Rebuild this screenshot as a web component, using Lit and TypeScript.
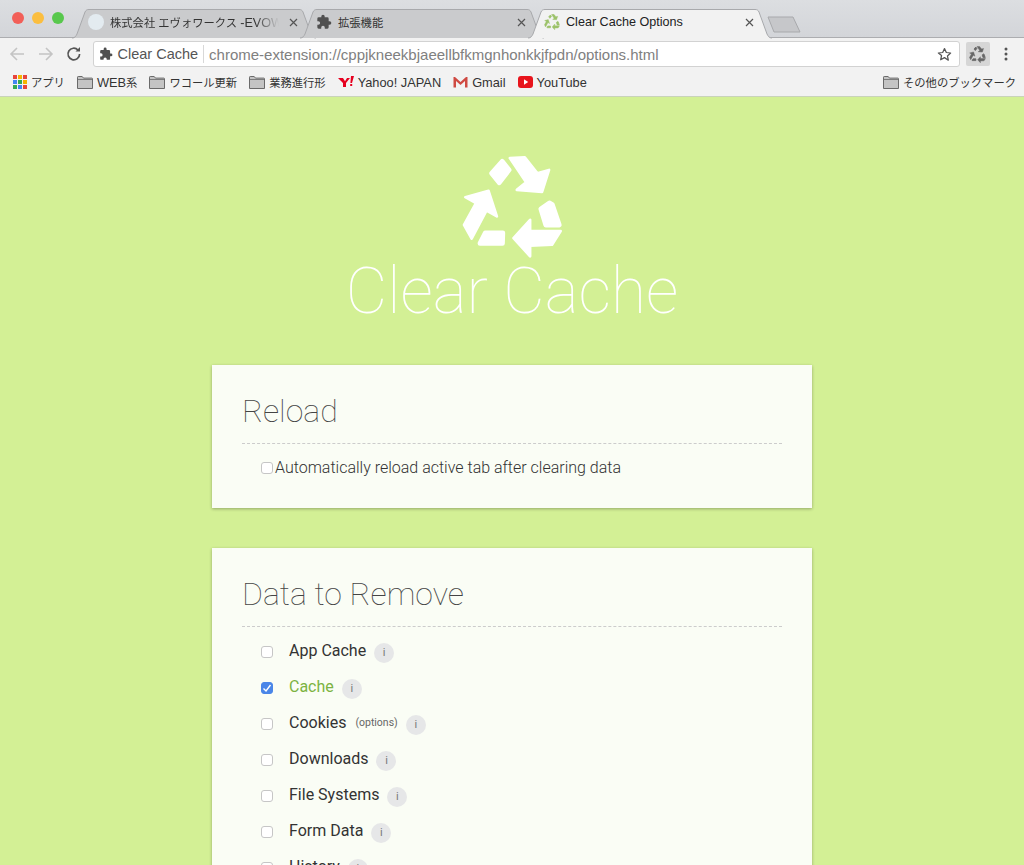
import { LitElement, html, css, svg } from "lit";
import { customElement } from "lit/decorators.js";

const recycleShapes = svg`
  <g stroke-width="14">
    <polygon points="484,64 505,90 475,129 452,100"/>
    <polygon points="433,279 486,279 485,311 417,311"/>
    <polygon points="600,207 626,189 635,194 656,256 615,256"/>
  </g>
  <g stroke-width="8">
    <polygon points="507,54 552,52 590,100 625,90 604,156 528,150 556,127"/>
    <polygon points="373,172 443,153 468,230 437,212 392,297 369,255 405,190"/>
    <polygon points="568,240 568,274 660,274 634,315 568,318 568,350 518,295"/>
  </g>`;

const recycle = (size: number, color: string) => html`<svg class="noshrink" width=${size} height=${size} viewBox="360 45 310 310" fill=${color} stroke=${color} stroke-linejoin="round">${recycleShapes}</svg>`;

const puzzle = (size: number, color = "#505050") => html`<svg class="noshrink" width=${size} height=${size} viewBox="0 0 24 24" fill=${color}><path d="M20.5 11H19V7a2 2 0 0 0-2-2h-4V3.5a2.5 2.5 0 0 0-5 0V5H4a2 2 0 0 0-2 2v3.8h1.5a2.7 2.7 0 0 1 0 5.4H2V20a2 2 0 0 0 2 2h3.8v-1.5a2.7 2.7 0 0 1 5.4 0V22H17a2 2 0 0 0 2-2v-4h1.5a2.5 2.5 0 0 0 0-5z"/></svg>`;

const closeX = html`<svg class="close" width="9" height="9" viewBox="0 0 9 9" stroke="#555" stroke-width="1.2"><path d="M1 1l7 7M8 1l-7 7"/></svg>`;

const folder = html`<svg class="noshrink" width="16" height="13" viewBox="0 0 16 13"><path d="M.5 12.5V1.2q0-.7.7-.7h4l1.3 1.6h8.3q.7 0 .7.7v9.7z" fill="#c4c4c4" stroke="#6a6a6a"/><path d="M.5 3.5h15" stroke="#6a6a6a" stroke-width=".8"/></svg>`;

const appsColors = ["#e8453c","#f4b400","#e8453c","#4285f4","#34a853","#f4b400","#34a853","#4285f4","#e8453c"];
const apps = html`<svg class="noshrink" width="14" height="14" viewBox="0 0 14 14">${appsColors.map((c, i) => svg`<rect x=${(i % 3) * 5} y=${Math.floor(i / 3) * 5} width="4" height="4" fill=${c}/>`)}</svg>`;

const rows: { label: string; checked?: boolean; options?: boolean }[] = [
  { label: "App Cache" },
  { label: "Cache", checked: true },
  { label: "Cookies", options: true },
  { label: "Downloads" },
  { label: "File Systems" },
  { label: "Form Data" },
  { label: "History" },
];

@customElement("app-root")
export class AppRoot extends LitElement {
  static styles = css`
    :host { display: block; width: 1024px; height: 865px; overflow: hidden; background: #d3f095; font-family: "Liberation Sans", "Noto Sans CJK JP", sans-serif; }
    .noshrink { flex: none; display: block; }
    .strip { height: 37px; display: flex; background: linear-gradient(#dcdee1, #d3d5d9); border-bottom: 1px solid #acadb0; position: relative; box-sizing: content-box; }
    .lights { display: flex; gap: 8px; padding: 12px 0 0 12px; width: 72px; box-sizing: border-box; flex: none; }
    .lights i { width: 12px; height: 12px; border-radius: 50%; flex: none; }
    .tabs { display: flex; align-items: flex-end; flex: none; }
    .tab { width: 244px; height: 29px; margin-right: -16px; position: relative; display: flex; align-items: center; padding: 0 13px 3px 16px; box-sizing: border-box; gap: 6px; font-size: 12.6px; color: #333; margin-bottom: -1px; }
    .tab.active { z-index: 2; color: #222; }
    .shape { position: absolute; left: 0; top: 0; z-index: 0; }
    .tab > *:not(.shape) { position: relative; z-index: 1; }
    .title { flex: 1; white-space: nowrap; overflow: hidden; min-width: 0; }
    .title.fade { -webkit-mask-image: linear-gradient(to left, transparent 0, #000 24px); mask-image: linear-gradient(to left, transparent 0, #000 24px); }
    .cjk { font-size: 11.3px; }
    .close { flex: none; margin: 0 5px 0 4px; }
    .fav { width: 16px; height: 16px; border-radius: 50%; background: #e3ebf0; flex: none; }
    .newtab { flex: none; margin: 16px 0 0 11px; z-index: 1; }
    .toolbar { height: 32px; background: #f2f2f2; display: flex; align-items: center; padding: 0 0 0 3px; }
    .nav { width: 28.5px; display: flex; justify-content: center; flex: none; }
    .omni { width: 867px; margin-left: 4px; height: 26px; flex: none; box-sizing: border-box; background: #fff; border: 1px solid #d2d2d2; border-radius: 3px; display: flex; align-items: center; padding: 0 6px 0 5px; font-size: 14.5px; white-space: nowrap; }
    .omni .chip { color: #555; margin-left: 5px; }
    .omni .sep { width: 1px; height: 18px; background: #d8d8d8; margin: 0 5px 0 5px; flex: none; }
    .omni .url { color: #808080; flex: 1; font-size: 15px; }
    .extbtn { width: 24px; height: 24px; background: #d6d6d6; border-radius: 2px; margin-left: 6px; display: flex; align-items: center; justify-content: center; flex: none; }
    .dots { flex: none; margin-left: 14px; }
    .bookmarks { background: #f2f2f2; border-bottom: 1px solid #c9d3ba; display: flex; align-items: center; padding: 0 8px 2px 13px; box-sizing: content-box; height: 24px; gap: 12px; font-size: 12.8px; color: #333; white-space: nowrap; }
    .bm { display: flex; align-items: center; gap: 4px; }
    .bm.last { margin-left: auto; }
    .page { display: flex; flex-direction: column; align-items: center; padding-top: 58px; }
    .hero { display: flex; flex-direction: column; align-items: center; }
    .hero h1 { margin: -4px 0 0; font: 100 64px/76px Roboto, sans-serif; color: #fff; }
    .card { width: 600px; box-sizing: border-box; background: #fafdf5; box-shadow: 0 1px 3px rgba(0,0,0,.3); padding: 27px 30px 0; margin-bottom: 40px; }
    .first { margin-top: 35px; height: 143px; }
    .card h2 { margin: 0; font: 100 32px/38px Roboto, sans-serif; color: #444; padding: 0 0 13px 0; border-bottom: 1px dashed #ccc; }
    .cb { width: 12px; height: 12px; box-sizing: border-box; border: 1px solid #c6c6c6; border-radius: 3px; background: #fff; flex: none; display: block; }
    .cb.on { background: #4a86e8; border-color: #4a86e8; }
    .cb svg { display: block; }
    .reload { display: flex; align-items: center; padding: 14px 0 0 19px; gap: 2px; font: 300 16px/20px Roboto, sans-serif; color: #333; }
    .list { padding-top: 7px; }
    .row { height: 36px; display: flex; align-items: center; padding-left: 19px; font: 400 16px/20px Roboto, sans-serif; color: #333; }
    .row .label { margin-left: 16px; position: relative; top: -1px; }
    .row.on .label { color: #7cb342; }
    .opt { font-size: 10.5px; color: #666; margin-left: 9px; position: relative; top: -1px; }
    .info { width: 20px; height: 20px; border-radius: 50%; background: #e6e7e8; color: #777; font-size: 11px; line-height: 20px; text-align: center; margin-left: 8px; position: relative; top: 1px; flex: none; }
  `;

  private tab(content: unknown, active = false) {
    const path = "M0 29C3 29 4 27 5 25L13 3C14 1 15 .5 17 .5H227C229 .5 230 1 231 3L239 25C240 27 241 29 244 29";
    return html`<div class="tab ${active ? "active" : ""}">
      <svg class="shape" width="244" height="30" viewBox="0 0 244 30"><path d=${path} fill=${active ? "#f2f2f2" : "#cacbcd"} stroke="#a8a9ac"/></svg>
      ${content}
    </div>`;
  }

  render() {
    return html`
      <div class="strip">
        <div class="lights"><i style="background:#f25f58"></i><i style="background:#fbbe3f"></i><i style="background:#58c84d"></i></div>
        <div class="tabs">
          ${this.tab(html`<span class="fav"></span><span class="title fade"><span class="cjk">株式会社 エヴォワークス </span>-EVOWORKS</span>${closeX}`)}
          ${this.tab(html`${puzzle(16)}<span class="title cjk">拡張機能</span>${closeX}`)}
          ${this.tab(html`${recycle(16, "#9cc26a")}<span class="title">Clear Cache Options</span>${closeX}`, true)}
        </div>
        <svg class="newtab" width="34" height="17" viewBox="0 0 34 17"><path d="M1 1H26L33 16H7z" fill="#c6c7ca" stroke="#a8a9ac"/></svg>
      </div>
      <div class="toolbar">
        <div class="nav"><svg width="16" height="16" viewBox="0 0 16 16" fill="none" stroke="#c4c4c4" stroke-width="1.6"><path d="M15 8H2M8 2L2 8l6 6"/></svg></div>
        <div class="nav"><svg width="16" height="16" viewBox="0 0 16 16" fill="none" stroke="#c4c4c4" stroke-width="1.6"><path d="M1 8h13M8 2l6 6-6 6"/></svg></div>
        <div class="nav"><svg width="16" height="16" viewBox="0 0 16 16" fill="none" stroke="#555" stroke-width="1.7"><path d="M13.6 8A5.8 5.8 0 1 1 12 4"/><path d="M14 1v4.5H9.5z" fill="#555" stroke="none"/></svg></div>
        <div class="omni">
          ${puzzle(14)}<span class="chip">Clear Cache</span><span class="sep"></span>
          <span class="url">chrome-extension://cppjkneekbjaeellbfkmgnhonkkjfpdn/options.html</span>
          <svg class="noshrink" width="15" height="15" viewBox="0 0 24 24" fill="none" stroke="#555" stroke-width="2" stroke-linejoin="round" style="margin-right:1px"><path d="M12 2.5l2.9 6.3 6.9.8-5.1 4.7 1.4 6.8L12 17l-6.1 3.4 1.4-6.8L2.2 9.6l6.9-.8z"/></svg>
        </div>
        <div class="extbtn">${recycle(17, "#666")}</div>
        <svg class="dots" width="4" height="14" viewBox="0 0 4 14" fill="#555"><circle cx="2" cy="2" r="1.5"/><circle cx="2" cy="7" r="1.5"/><circle cx="2" cy="12" r="1.5"/></svg>
      </div>
      <div class="bookmarks">
        <div class="bm">${apps}<span class="cjk">アプリ</span></div>
        <div class="bm">${folder}<span>WEB<span class="cjk">系</span></span></div>
        <div class="bm">${folder}<span class="cjk">ワコール更新</span></div>
        <div class="bm">${folder}<span class="cjk">業務進行形</span></div>
        <div class="bm"><svg class="noshrink" width="16" height="12" viewBox="0 0 16 12" fill="#e6001f"><path d="M0 2h5l2 3.2L9 2h3L8 7v4H5V7z"/><path d="M13 0h3l-2 7h-1.6zM12.2 8h2v2h-2z"/></svg><span>Yahoo! JAPAN</span></div>
        <div class="bm"><svg class="noshrink" width="15" height="12" viewBox="0 0 15 12"><path d="M.5 11.5V1h1.5l5.5 5L13 1h1.5v10.5H12V5L7.5 9 3 5v6.5z" fill="#cf4a42"/></svg><span>Gmail</span></div>
        <div class="bm"><svg class="noshrink" width="15" height="12" viewBox="0 0 15 12"><rect width="15" height="12" rx="3" fill="#e8141c"/><path d="M6 3.3l4.2 2.7L6 8.7z" fill="#fff"/></svg><span>YouTube</span></div>
        <div class="bm last">${folder}<span class="cjk">その他のブックマーク</span></div>
      </div>
      <div class="page">
        <div class="hero">
          ${recycle(103, "#ffffff")}
          <h1>Clear Cache</h1>
        </div>
        <section class="card first">
          <h2>Reload</h2>
          <div class="reload"><span class="cb"></span><span>Automatically reload active tab after clearing data</span></div>
        </section>
        <section class="card">
          <h2>Data to Remove</h2>
          <div class="list">
            ${rows.map((r) => html`<div class="row ${r.checked ? "on" : ""}">
              <span class="cb ${r.checked ? "on" : ""}">${r.checked ? html`<svg width="10" height="10" viewBox="0 0 10 10" fill="none" stroke="#fff" stroke-width="1.4"><path d="M1.5 5.5L4 8l4.5-6"/></svg>` : ""}</span>
              <span class="label">${r.label}</span>
              ${r.options ? html`<span class="opt">(options)</span>` : ""}
              <span class="info">i</span>
            </div>`)}
          </div>
        </section>
      </div>
    `;
  }
}
